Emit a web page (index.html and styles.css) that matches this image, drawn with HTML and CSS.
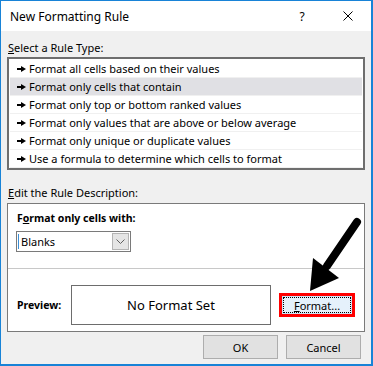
FILE: index.html
```html
<!DOCTYPE html>
<html lang="en">

<head>
    <meta charset="UTF-8">
    <meta name="viewport" content="width=device-width, initial-scale=1.0">
    <title>New Formatting Rule</title>
    <link rel="stylesheet" href="styles.css">
</head>

<body>
    <div class="window">
        <div class="titlebar">
            <span class="title">New Formatting Rule</span>
            <span class="help">?</span>
            <span class="close">
                <svg width="10" height="10" viewBox="0 0 10 10">
                    <path d="M0.5 0.5 L9.5 9.5 M9.5 0.5 L0.5 9.5" stroke="#000" stroke-width="1" fill="none" />
                </svg>
            </span>
        </div>

        <div class="content">
            <div class="label"><u>S</u>elect a Rule Type:</div>
            <ul class="rule-list">
                <li><span class="bullet"></span>Format all cells based on their values</li>
                <li class="selected"><span class="bullet"></span>Format only cells that contain</li>
                <li><span class="bullet"></span>Format only top or bottom ranked values</li>
                <li><span class="bullet"></span>Format only values that are above or below average</li>
                <li><span class="bullet"></span>Format only unique or duplicate values</li>
                <li><span class="bullet"></span>Use a formula to determine which cells to format</li>
            </ul>

            <div class="label label-edit"><u>E</u>dit the Rule Description:</div>
            <div class="desc">
                <div class="desc-top">
                    <div class="bold">F<u>o</u>rmat only cells with:</div>
                    <div class="select">
                        <span class="select-text">Blanks</span>
                        <span class="select-btn">
                            <svg width="9" height="5" viewBox="0 0 9 5">
                                <path d="M0.5 0.5 L4.5 4.5 L8.5 0.5" stroke="#606060" stroke-width="1" fill="none" />
                            </svg>
                        </span>
                    </div>
                </div>
                <div class="desc-bottom">
                    <span class="bold preview-label">Preview:</span>
                    <div class="preview">No Format Set</div>
                    <div class="red-box">
                        <button class="format-btn"><u>F</u>ormat...</button>
                    </div>
                </div>
            </div>

            <div class="buttons">
                <button class="btn">OK</button>
                <button class="btn">Cancel</button>
            </div>
        </div>

        <svg class="arrow" width="64" height="80" viewBox="0 0 64 80">
            <path d="M57 6 L27 50" stroke="#000" stroke-width="8" stroke-linecap="round" fill="none" />
            <path d="M13 42 L39 62 L10 75 Z" fill="#000" />
        </svg>
    </div>
</body>

</html>
```

FILE: styles.css
```css
body {
    margin: 0;
    font-family: "Noto Sans", sans-serif;
    font-size: 11px;
    color: #000;
}

.window {
    position: relative;
    width: 373px;
    height: 366px;
    box-sizing: border-box;
    border: 1px solid #1883d7;
    border-right-width: 2px;
    border-bottom-width: 2px;
    background-color: #f0f0f0;
    overflow: hidden;
}

.titlebar {
    height: 30px;
    background-color: #fff;
    display: flex;
    align-items: center;
    padding-left: 9px;
}

.title {
    font-size: 12px;
    flex: 1;
}

.help {
    font-size: 12px;
    width: 46px;
    text-align: center;
    margin-right: -2px;
}

.close {
    width: 46px;
    display: flex;
    justify-content: center;
    margin-left: 2px;
}

.content {
    padding: 9px 6px 0 6px;
}

.label {
    line-height: 16px;
    padding-left: 1px;
    margin-bottom: 1px;
}

.label-edit {
    margin-top: 15px;
    margin-bottom: 2px;
}

.rule-list {
    list-style: none;
    margin: 0;
    padding: 1px 1px 0 1px;
    border: 2px solid #6e6e6e;
    background-color: #fff;
}

.rule-list li {
    height: 18px;
    box-sizing: border-box;
    border-bottom: 1px solid #f0f0f0;
    display: flex;
    align-items: center;
    padding-left: 7px;
    line-height: 17px;
}

.rule-list li.selected {
    background-color: #e0e0e4;
}

.bullet {
    width: 9px;
    height: 6px;
    margin-right: 3px;
    background:
        linear-gradient(#000, #000) left center / 5px 2px no-repeat;
    position: relative;
}

.bullet::after {
    content: "";
    position: absolute;
    right: 0;
    top: 0;
    border-left: 5px solid #000;
    border-top: 3px solid transparent;
    border-bottom: 3px solid transparent;
}

.desc {
    border: 1px solid #7a7a7a;
    background-color: #fff;
}

.desc-top {
    padding: 6px 0 16px 0;
    border-bottom: 1px solid #c8c8c8;
}

.bold {
    font-weight: bold;
    font-size: 10.5px;
    line-height: 16px;
}

.desc-top .bold {
    padding-left: 9px;
    margin-bottom: 5px;
}

.select {
    margin-left: 8px;
    width: 115px;
    height: 21px;
    box-sizing: border-box;
    border: 1px solid #7a7a7a;
    display: flex;
    align-items: center;
    justify-content: space-between;
    padding: 0 1px 0 1px;
}

.select-text {
    border-left: 1px solid #3c8fd6;
    padding-left: 2px;
    line-height: 15px;
}

.select-btn {
    width: 17px;
    height: 17px;
    box-sizing: border-box;
    background-color: #e5e5e5;
    border: 1px solid #b4b4b4;
    display: flex;
    align-items: center;
    justify-content: center;
}

.desc-bottom {
    display: flex;
    align-items: center;
    padding: 16px 0 6px 9px;
}

.preview-label {
    width: 54px;
}

.preview {
    width: 200px;
    height: 40px;
    box-sizing: border-box;
    border: 1px solid #6d6d6d;
    display: flex;
    align-items: center;
    justify-content: center;
    font-size: 13px;
}

.red-box {
    margin-left: 8px;
    border: 3px solid #ff0000;
    width: 76px;
    height: 24px;
    box-sizing: border-box;
    display: flex;
}

.format-btn {
    flex: 1;
    margin: 0;
    padding: 0;
    font-family: inherit;
    font-size: 11px;
    background-color: #e5f1fb;
    border: 1px solid #cce4f7;
    outline: 1px dotted #000;
    outline-offset: -2px;
}

.buttons {
    display: flex;
    justify-content: flex-end;
    gap: 8px;
    margin-top: 3px;
    padding-right: 4px;
}

.btn {
    width: 75px;
    height: 24px;
    margin: 0;
    font-family: inherit;
    font-size: 11px;
    background-color: #e1e1e1;
    border: 1px solid #adadad;
}

.arrow {
    position: absolute;
    left: 299px;
    top: 215px;
}
```
